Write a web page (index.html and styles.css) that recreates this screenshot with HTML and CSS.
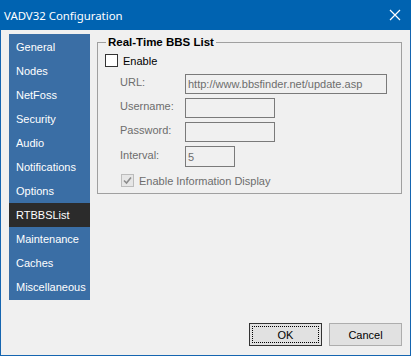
FILE: index.html
```html
<!DOCTYPE html>
<html lang="en">
<head>
    <meta charset="UTF-8">
    <title>VADV32 Configuration</title>
    <link rel="stylesheet" href="styles.css">
</head>
<body>
    <div class="window">
        <div class="titlebar">
            <span class="title">VADV32 Configuration</span>
            <svg class="close" width="12" height="12" viewBox="0 0 12 12">
                <path d="M1 1 L11 11 M11 1 L1 11" stroke="#fff" stroke-width="1.2" fill="none"/>
            </svg>
        </div>
        <div class="body">
            <div class="main">
                <ul class="nav">
                    <li>General</li>
                    <li>Nodes</li>
                    <li>NetFoss</li>
                    <li>Security</li>
                    <li>Audio</li>
                    <li>Notifications</li>
                    <li>Options</li>
                    <li class="active">RTBBSList</li>
                    <li>Maintenance</li>
                    <li>Caches</li>
                    <li>Miscellaneous</li>
                </ul>
                <fieldset class="group">
                    <legend>Real-Time BBS List</legend>
                    <label class="check">
                        <span class="box"></span>
                        <span>Enable</span>
                    </label>
                    <div class="fields">
                        <span class="lbl">URL:</span>
                        <div class="input wide">http://www.bbsfinder.net/update.asp</div>
                        <span class="lbl">Username:</span>
                        <div class="input mid"></div>
                        <span class="lbl">Password:</span>
                        <div class="input mid"></div>
                        <span class="lbl">Interval:</span>
                        <div class="input short">5</div>
                    </div>
                    <label class="check disabled">
                        <span class="box">
                            <svg width="9" height="9" viewBox="0 0 9 9">
                                <path d="M1 4.5 L3.5 7 L8 1.5" stroke="#8c8c8c" stroke-width="1.6" fill="none"/>
                            </svg>
                        </span>
                        <span>Enable Information Display</span>
                    </label>
                </fieldset>
            </div>
            <div class="buttons">
                <button class="btn default"><span>OK</span></button>
                <button class="btn">Cancel</button>
            </div>
        </div>
    </div>
</body>
</html>
```

FILE: styles.css
```css
* {
    margin: 0;
    padding: 0;
    box-sizing: border-box;
}

body {
    font-family: 'Liberation Sans', Arial, sans-serif;
    font-size: 11px;
    color: #000;
    background: #f0f0f0;
    width: 411px;
    height: 356px;
    overflow: hidden;
}

.window {
    display: flex;
    flex-direction: column;
    height: 356px;
    border: 1px solid #1565b0;
    border-top: none;
    background: #f0f0f0;
}

.titlebar {
    display: flex;
    align-items: center;
    justify-content: space-between;
    height: 30px;
    margin: 0 -1px;
    padding: 0 10px 0 4px;
    background: #0063b1;
    color: #fff;
}

.title {
    font-family: 'Noto Sans', sans-serif;
    font-size: 11.4px;
}

.body {
    flex: 1;
    display: flex;
    flex-direction: column;
    justify-content: space-between;
    padding: 4px 8px 9px 8px;
}

.main {
    display: flex;
    align-items: flex-start;
}

.nav {
    list-style: none;
    width: 81px;
    padding-top: 1px;
    padding-bottom: 1px;
    background: #3a6ea5;
}

.nav li {
    height: 24px;
    line-height: 24px;
    padding-left: 7px;
    color: #fff;
}

.nav li.active {
    background: #2b2b2b;
}

.group {
    margin-left: 7px;
    width: 305px;
    height: 158px;
    margin-top: 2px;
    border: 1px solid #a0a0a0;
    padding: 5px 7px 0 7px;
}

.group legend {
    font-weight: bold;
    font-size: 11.5px;
    padding: 0 2px;
    margin-left: 1px;
}

.check {
    display: flex;
    align-items: center;
    gap: 5px;
    height: 15px;
}

.box {
    display: flex;
    align-items: center;
    justify-content: center;
    width: 13px;
    height: 13px;
    border: 1px solid #333;
    background: #fff;
}

.fields {
    display: grid;
    grid-template-columns: 65px auto;
    row-gap: 4px;
    align-items: center;
    padding-left: 15px;
    margin-top: 6px;
}

.lbl {
    color: #6d6d6d;
    padding-bottom: 4px;
}

.input {
    height: 20px;
    border: 1px solid #7a7a7a;
    color: #6d6d6d;
    padding: 3px 2px 0 2px;
    justify-self: start;
}

.wide {
    width: 202px;
}

.mid {
    width: 90px;
}

.short {
    width: 50px;
    height: 21px;
    padding-top: 4px;
}

.check.disabled {
    margin-top: 6px;
    margin-left: 16px;
    color: #6d6d6d;
}

.check.disabled .box {
    border-color: #bcbcbc;
    background: #e6e6e6;
}

.buttons {
    display: flex;
    justify-content: flex-end;
    gap: 7px;
}

.btn {
    width: 73px;
    height: 23px;
    font-family: 'Liberation Sans', Arial, sans-serif;
    font-size: 11px;
    background: #e1e1e1;
    border: 1px solid #adadad;
    color: #000;
}

.btn.default {
    border: 1px solid #333;
    padding: 2px;
}

.btn.default span {
    display: flex;
    align-items: center;
    justify-content: center;
    height: 100%;
    border: 1px dotted #000;
}
```
